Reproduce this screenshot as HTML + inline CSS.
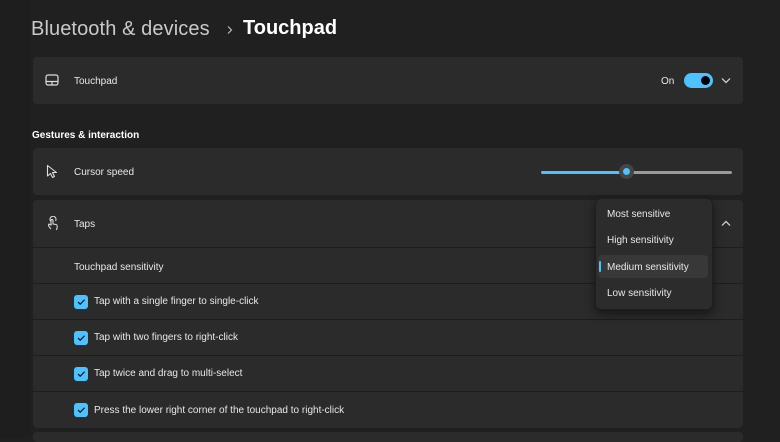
<!DOCTYPE html><html><head><style>
body{margin:0;width:780px;height:438px;background:#202020;font-family:"Segoe UI","Liberation Sans",sans-serif;color:#fff;position:relative;overflow:hidden}
.l{position:absolute;left:0;top:0;width:31px;height:438px;background:#1e1e1e}
.a{position:absolute}
.card{position:absolute;left:33px;width:710px;background:#2b2b2b;border-radius:4px}
.t{position:absolute;font-size:10px;color:#e8e8e8}
.cb{position:absolute;left:74px;width:14px;height:14px;background:#4cc2ff;border-radius:3px}
.cb svg{position:absolute;left:2px;top:2px}
.sep{position:absolute;left:33px;width:710px;height:1px;background:#1d1d1d}
</style></head><body>
<div class="l"></div>
<div class="a" style="left:31px;top:18px;font-size:20px;color:#c9c9c9;letter-spacing:0.1px">Bluetooth &amp; devices</div>
<svg class="a" style="left:226px;top:25px" width="8" height="10"><path d="M2 1.5L5.5 5L2 8.5" fill="none" stroke="#bbb" stroke-width="1.2"/></svg>
<div class="a" style="left:243px;top:17px;font-size:20px;font-weight:700">Touchpad</div>

<div class="card" style="top:57px;height:47px"></div>
<svg class="a" style="left:45px;top:74px" width="14" height="12"><rect x="1" y="1" width="12" height="10" rx="2" fill="none" stroke="#ddd" stroke-width="1.2"/><path d="M1 7.5H13M7 7.5V11" stroke="#ddd" stroke-width="1.2"/></svg>
<div class="t" style="left:74px;top:76px">Touchpad</div>
<div class="t" style="left:661px;top:76px">On</div>
<div class="a" style="left:684px;top:73px;width:29px;height:15px;border-radius:8px;background:#4cc2ff"></div>
<div class="a" style="left:701px;top:76px;width:9px;height:9px;border-radius:5px;background:#000"></div>
<svg class="a" style="left:721px;top:77px" width="10" height="7"><path d="M1 1.5L5 5.5L9 1.5" fill="none" stroke="#ddd" stroke-width="1.2"/></svg>

<div class="a" style="left:32px;top:130px;font-size:10px;font-weight:700">Gestures &amp; interaction</div>

<div class="card" style="top:148px;height:47px"></div>
<svg class="a" style="left:46px;top:164px" width="12" height="15"><path d="M1.5 1.5V12L4.5 9.5L6.5 13.5L8.5 12.5L6.5 8.5H10.5Z" fill="none" stroke="#ddd" stroke-width="1.1" stroke-linejoin="round"/></svg>
<div class="t" style="left:74px;top:167px">Cursor speed</div>
<div class="a" style="left:541px;top:171px;width:86px;height:3px;background:#4cc2ff;border-radius:2px"></div>
<div class="a" style="left:627px;top:171px;width:105px;height:3px;background:#9a9a9a;border-radius:2px"></div>
<div class="a" style="left:619px;top:164px;width:15px;height:15px;border-radius:8px;background:#454545"></div>
<div class="a" style="left:623px;top:168px;width:7px;height:7px;border-radius:4px;background:#4cc2ff"></div>

<div class="card" style="top:200px;height:228px"></div>
<div class="sep" style="top:247px"></div><div class="sep" style="top:283px"></div><div class="sep" style="top:319px"></div><div class="sep" style="top:355px"></div><div class="sep" style="top:391px"></div>
<div class="card" style="top:432px;height:10px"></div>
<svg class="a" style="left:46px;top:216px" width="14" height="15"><path d="M5 13C3 11 2 9 3 8L5 9V4.5A1 1 0 0 1 7 4.5V8L10 8.5C11.5 9 11.5 10 11 12L10.5 14M4.5 5A3 3 0 1 1 9.5 5" fill="none" stroke="#ddd" stroke-width="1.1"/></svg>
<div class="t" style="left:74px;top:219px">Taps</div>
<svg class="a" style="left:721px;top:220px" width="10" height="7"><path d="M1 5.5L5 1.5L9 5.5" fill="none" stroke="#ddd" stroke-width="1.2"/></svg>
<div class="t" style="left:74px;top:262px">Touchpad sensitivity</div>
<div class="cb" style="top:295px"><svg width="10" height="10"><path d="M2 5L4.2 7.2L8.5 2.8" fill="none" stroke="#000" stroke-width="1.1"/></svg></div>
<div class="t" style="left:94px;top:296px">Tap with a single finger to single-click</div>
<div class="cb" style="top:331px"><svg width="10" height="10"><path d="M2 5L4.2 7.2L8.5 2.8" fill="none" stroke="#000" stroke-width="1.1"/></svg></div>
<div class="t" style="left:94px;top:332px">Tap with two fingers to right-click</div>
<div class="cb" style="top:367px"><svg width="10" height="10"><path d="M2 5L4.2 7.2L8.5 2.8" fill="none" stroke="#000" stroke-width="1.1"/></svg></div>
<div class="t" style="left:94px;top:368px">Tap twice and drag to multi-select</div>
<div class="cb" style="top:403px"><svg width="10" height="10"><path d="M2 5L4.2 7.2L8.5 2.8" fill="none" stroke="#000" stroke-width="1.1"/></svg></div>
<div class="t" style="left:94px;top:405px">Press the lower right corner of the touchpad to right-click</div>

<div class="a" style="left:595px;top:198px;width:116px;height:110px;background:#2c2c2c;border:1px solid #1f1f1f;border-radius:6px;box-shadow:0 4px 10px rgba(0,0,0,.5)"></div>
<div class="a" style="left:598px;top:255px;width:110px;height:23px;background:#383838;border-radius:4px"></div>
<div class="a" style="left:599px;top:261px;width:2px;height:11px;background:#4cc2ff;border-radius:1px"></div>
<div class="t" style="left:607px;top:209px">Most sensitive</div>
<div class="t" style="left:607px;top:235px">High sensitivity</div>
<div class="t" style="left:607px;top:262px">Medium sensitivity</div>
<div class="t" style="left:607px;top:288px">Low sensitivity</div>
</body></html>
